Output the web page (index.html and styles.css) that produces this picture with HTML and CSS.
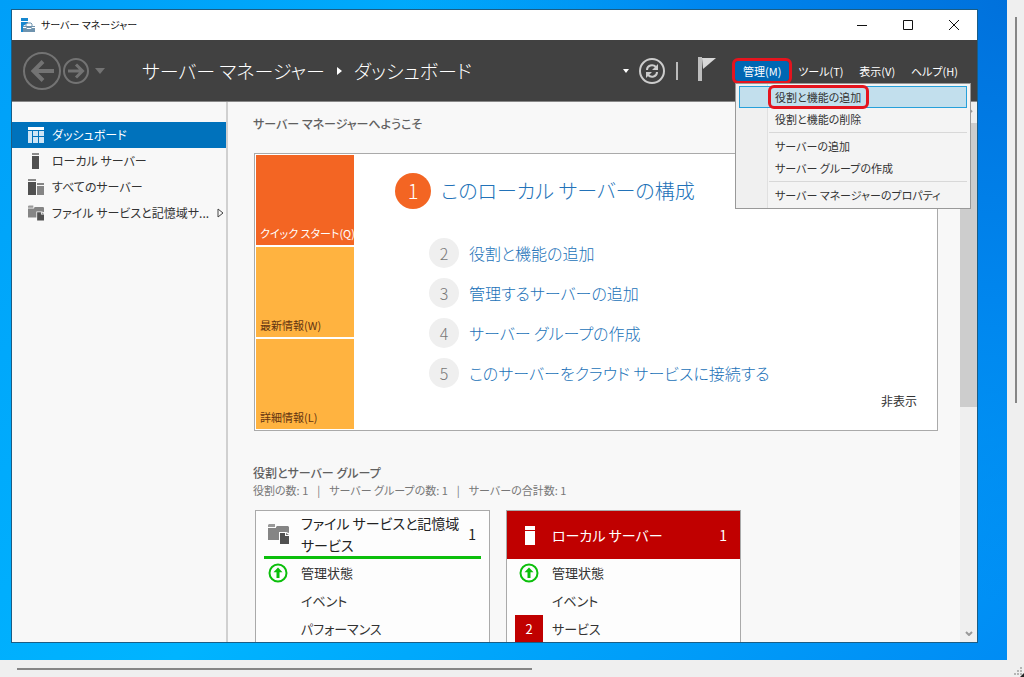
FILE: index.html
```html
<!DOCTYPE html>
<html lang="ja">
<head>
<meta charset="utf-8">
<title>サーバー マネージャー</title>
<link rel="stylesheet" href="styles.css">
</head>
<body>
<svg class="defs" aria-hidden="true">
  <symbol id="i-server" viewBox="0 0 16 16"><path fill="#8a8a8a" d="M4 0h7v2H4z"/><path fill="#505050" d="M4 3h7v13H4z"/></symbol>
  <symbol id="i-servers" viewBox="0 0 16 16"><path fill="#8a8a8a" d="M0 0h8v2H0z"/><path fill="#505050" d="M0 3h8v13H0z"/><path fill="#858585" d="M9 4h7v2H9zM9 7h7v9H9z"/></symbol>
  <symbol id="i-files" viewBox="0 0 21 20"><path fill="#9a9a9a" d="M1 0h6v3H0V1z"/><path fill="#858585" d="M0 4h8V3l1-1h11l1 1v6l-3-1h-7v8H0z"/><path fill="#505050" d="M12 9h5v3h4v8h-9z"/><path fill="#757575" d="M18 9l3 2h-3z"/></symbol>
  <symbol id="i-up" viewBox="0 0 20 20"><circle cx="10" cy="10" r="8.5" fill="none" stroke="#0bbf0b" stroke-width="2"/><path fill="#0bbf0b" d="M10 4.500l4.500 4.700h-3V15h-3V9.200h-3z"/></symbol>
</svg>
<div class="viewer">
  <div class="desktop">
    <div class="window">
      <div class="titlebar">
        <svg class="app-icon" viewBox="0 0 14 14"><path fill="#1687cf" d="M0 0h7v3H0zM0 4h7v1L2 8v6H0z"/><path fill="#6f93ae" d="M2 8h12v6H2z"/><path fill="none" stroke="#6f93ae" d="M5 8V6l1-1h4l1 1v2"/><path fill="none" stroke="#fff" d="M2 9.500h3l1 1h4l1-1h3"/></svg>
        <span class="app-name">サーバー マネージャー</span>
        <button class="win-btn" aria-label="最小化"><svg viewBox="0 0 12 12"><path d="M1 6.500h10"/></svg></button>
        <button class="win-btn" aria-label="最大化"><svg viewBox="0 0 12 12"><path d="M1.500 1.500h9v9h-9z"/></svg></button>
        <button class="win-btn" aria-label="閉じる"><svg viewBox="0 0 12 12"><path d="M1 1l10 10M11 1L1 11"/></svg></button>
      </div>
      <header class="header">
        <button class="icon-btn" aria-label="戻る"><svg class="back" viewBox="0 0 38 38"><circle cx="19" cy="19" r="18"/><path class="thick" d="M31 19H10M20 9.500L10.500 19l9.500 9.500"/></svg></button>
        <button class="icon-btn" aria-label="進む"><svg class="forward" viewBox="0 0 26 26"><circle cx="13" cy="13" r="12"/><path class="mid" d="M5 13h14M13 6.500l6.500 6.500-6.500 6.500"/></svg></button>
        <button class="icon-btn" aria-label="履歴"><svg class="history" viewBox="0 0 10 6"><path d="M0 0h10L5 6z"/></svg></button>
        <h1 class="crumbs"><span>サーバー マネージャー</span><svg class="crumb-arrow" viewBox="0 0 5 8"><path fill="#fff" d="M0 0l5 4-5 4z"/></svg><span>ダッシュボード</span></h1>
        <button class="icon-btn" aria-label="一覧"><svg class="tiny-down" viewBox="0 0 6 4"><path fill="#fff" d="M0 0h6L3 4z"/></svg></button>
        <button class="icon-btn refresh" aria-label="最新の情報に更新"><svg viewBox="0 0 26 26"><circle cx="13" cy="13" r="12"/><path d="M8 12c0-5 6-6 9-3M18 14c0 5-6 6-9 3"/><path class="solid" d="M19 6v6h-6zM7 20v-6h6z"/></svg></button>
        <span class="divider"></span>
        <button class="icon-btn flag" aria-label="通知"><svg viewBox="0 0 18 24"><path fill="#bdbdbd" d="M0 0h4v24H0z"/><path fill="#d8d8d8" d="M4 1h14L5 12z"/></svg></button>
        <nav class="menubar">
          <div class="menu">
            <button class="menu-btn open">管理(M)</button>
            <div class="dropdown">
              <button class="entry selected"><span class="marked">役割と機能の追加</span></button>
              <button class="entry">役割と機能の削除</button>
              <hr>
              <button class="entry">サーバーの追加</button>
              <button class="entry">サーバー グループの作成</button>
              <hr>
              <button class="entry">サーバー マネージャーのプロパティ</button>
            </div>
          </div>
          <button class="menu-btn">ツール(T)</button>
          <button class="menu-btn">表示(V)</button>
          <button class="menu-btn">ヘルプ(H)</button>
        </nav>
      </header>
      <div class="body">
        <nav class="sidebar">
          <a class="side-link active" href="#"><svg viewBox="0 0 16 16"><path fill="#fff" d="M0 0h16v3H0z"/><path fill="#cfe5f5" d="M0 4h4v12H0zM5 4h5v5H5zM11 4h5v5h-5zM5 10h5v6H5zM11 10h5v6h-5z"/></svg><span>ダッシュボード</span></a>
          <a class="side-link" href="#"><svg><use href="#i-server"/></svg><span>ローカル サーバー</span></a>
          <a class="side-link" href="#"><svg><use href="#i-servers"/></svg><span>すべてのサーバー</span></a>
          <a class="side-link" href="#"><svg><use href="#i-files"/></svg><span>ファイル サービスと記憶域サ...</span><svg class="expand" viewBox="0 0 7 10"><path d="M1 1l5 4-5 4z"/></svg></a>
        </nav>
        <main class="main">
          <h2 class="section-title">サーバー マネージャーへようこそ</h2>
          <section class="welcome">
            <div class="tiles">
              <button class="tile hot">クイック スタート(Q)</button>
              <button class="tile">最新情報(W)</button>
              <button class="tile">詳細情報(L)</button>
            </div>
            <div class="steps">
              <a class="step first" href="#"><span class="num">1</span><span>このローカル サーバーの構成</span></a>
              <a class="step" href="#"><span class="num">2</span><span>役割と機能の追加</span></a>
              <a class="step" href="#"><span class="num">3</span><span>管理するサーバーの追加</span></a>
              <a class="step" href="#"><span class="num">4</span><span>サーバー グループの作成</span></a>
              <a class="step" href="#"><span class="num">5</span><span>このサーバーをクラウド サービスに接続する</span></a>
              <button class="hide-btn">非表示</button>
            </div>
          </section>
          <h2 class="section-title">役割とサーバー グループ</h2>
          <p class="counts"><span>役割の数: 1</span><span>|</span><span>サーバー グループの数: 1</span><span>|</span><span>サーバーの合計数: 1</span></p>
          <div class="cards">
            <section class="card">
              <h3 class="card-head ok"><svg class="files"><use href="#i-files"/></svg><span class="card-name">ファイル サービスと記憶域サービス</span><span>1</span></h3>
              <a class="row" href="#"><svg><use href="#i-up"/></svg><span>管理状態</span></a>
              <a class="row" href="#"><span></span><span>イベント</span></a>
              <a class="row" href="#"><span></span><span>パフォーマンス</span></a>
            </section>
            <section class="card">
              <h3 class="card-head alert"><svg class="srv" viewBox="0 0 10 19"><path fill="#fff" d="M0 0h10v4H0zM0 5h10v14H0z"/></svg><span class="card-name">ローカル サーバー</span><span>1</span></h3>
              <a class="row" href="#"><svg><use href="#i-up"/></svg><span>管理状態</span></a>
              <a class="row" href="#"><span></span><span>イベント</span></a>
              <a class="row" href="#"><span class="badge">2</span><span>サービス</span></a>
            </section>
          </div>
        </main>
        <div class="scrollbar">
          <svg viewBox="0 0 8 5"><path d="M1 4l3-3 3 3"/></svg>
          <div class="track"><div class="thumb"></div></div>
          <svg viewBox="0 0 8 5"><path d="M1 1l3 3 3-3"/></svg>
        </div>
      </div>
    </div>
  </div>
  <div class="vbar"><div class="vthumb"></div></div>
  <div class="hbar"><div class="hthumb"></div></div>
  <div class="corner"><svg viewBox="0 0 17 17"><path fill="#b5b5b5" d="M13 7h2v2h-2zM10 10h2v2h-2zM13 10h2v2h-2zM7 13h2v2H7zM10 13h2v2h-2zM13 13h2v2h-2z"/><path fill="#222" d="M17 13v4h-4z"/></svg></div>
</div>
</body>
</html>
```
FILE: styles.css
```css
* { box-sizing: border-box; }
body {
  margin: 0;
  font: 11px/16px "Noto Sans CJK JP", "Noto Sans", sans-serif;
  font-feature-settings: "palt";
  color: #333;
}
button { font: inherit; font-feature-settings: inherit; color: inherit; background: none; border: 0; padding: 0; white-space: nowrap; }
a { color: inherit; text-decoration: none; }
h1, h2, h3, p { margin: 0; font-weight: 400; }
svg { display: block; flex: none; }
.defs { display: none; }

.viewer { height: 100vh; display: grid; grid-template: minmax(0, 1fr) 17px / minmax(0, 1fr) 17px; background: #efefef; }
.desktop {
  display: flex;
  padding: 9px 29px 17px 11px;
  background: radial-gradient(circle at 100% 0, #0071dc 0, #0086ee 25%, transparent 50%), linear-gradient(135deg, #009ff8, #00b4ff 50%, #008cf4);
}
.window { flex: 1; min-width: 0; display: flex; flex-direction: column; border: 1px solid #1b5d85; background: #f8f8f8; }

.titlebar { height: 30px; flex: none; display: flex; align-items: center; background: #fff; color: #111; }
.app-icon { width: 14px; height: 14px; margin: 0 6px 0 9px; }
.app-name { flex: 1; font-size: 10px; }
.win-btn { width: 46px; height: 30px; display: grid; place-items: center; }
.win-btn svg { width: 12px; height: 12px; fill: none; stroke: #111; }

.header { height: 62px; flex: none; display: flex; align-items: center; background: #414141; color: #fff; border-bottom: 1px solid #888; padding: 0 12px 0 11px; }
.icon-btn svg { fill: none; stroke: #737373; stroke-width: 2; }
.icon-btn .back { width: 38px; height: 38px; }
.icon-btn .thick { stroke-width: 4; }
.icon-btn .mid { stroke-width: 3; }
.icon-btn .forward { width: 26px; height: 26px; margin-left: 2px; }
.icon-btn .history { width: 10px; height: 6px; margin-left: 6px; fill: #737373; stroke: none; }
.icon-btn .tiny-down { width: 6px; height: 4px; stroke: none; margin-right: 10px; }
.crumbs { flex: 1; display: flex; align-items: center; gap: 12px; margin-left: 37px; font-size: 19px; line-height: 32px; font-weight: 300; white-space: nowrap; }
.crumb-arrow { width: 5px; height: 8px; }
.icon-btn.refresh svg { width: 26px; height: 26px; stroke: #ccc; }
.icon-btn.refresh .solid { fill: #ccc; stroke: none; }
.divider { width: 2px; height: 18px; margin: 0 20px 0 11px; background: #bbb; }
.icon-btn.flag svg { width: 18px; height: 24px; margin-bottom: 4px; stroke: none; }
.menubar { display: flex; align-items: center; justify-content: space-between; width: 230px; margin-left: 19px; }
.menu { position: relative; }
.menu-btn { height: 20px; padding: 0 7px; }
.menu-btn.open { padding: 0 8px; background: #0067b3; outline: 3px solid #e5141e; border-radius: 3px; }
.dropdown { position: absolute; z-index: 2; top: 22px; left: 0; width: 236px; padding: 2px 3px; background: linear-gradient(90deg, #f0f0f0 31px, #e0e0e0 31px, #e0e0e0 32px, #f4f4f4 32px); border: 1px solid #999; color: #333; }
.entry { display: block; width: 100%; height: 22px; padding: 0 0 0 35px; border: 1px solid transparent; text-align: left; }
.entry.selected { background: #c2dfed; border-color: #26a0da; }
.marked { display: inline-block; padding: 1px 5px 1px 4px; margin-left: -4px; outline: 3px solid #e5141e; border-radius: 3px; }
.dropdown hr { height: 1px; margin: 2px 0 2px 30px; border: 0; background: #d8d8d8; }

.body { flex: 1; min-height: 0; display: grid; grid-template-columns: 216px minmax(0, 1fr) 17px; }
.sidebar { padding-top: 20px; border-right: 2px solid #d0d0d0; }
.side-link { display: grid; grid-template-columns: 16px 1fr auto; gap: 8px; align-items: center; height: 26px; padding: 0 5px 0 16px; font-size: 12px; white-space: nowrap; }
.side-link svg { width: 16px; height: 16px; }
.side-link.active { background: #0072bc; color: #fff; }
.side-link .expand { width: 7px; height: 10px; fill: none; stroke: #444; }

.main { overflow: hidden; padding: 13px 22px 0 25px; }
.section-title { font-size: 12px; line-height: 18px; font-weight: 500; color: #606060; }
.welcome { display: flex; margin: 20px 0 33px 1px; border: 1px solid #aaa; background: #fff; }
.tiles { width: 99px; display: grid; grid-template-columns: minmax(0, 1fr); gap: 2px; padding: 1px 0 1px 1px; }
.tile { height: 90px; display: flex; align-items: flex-end; padding: 0 0 4px 4px; background: #ffb340; color: #633411; }
.tile.hot { background: #f36523; color: #fff; }
.steps { flex: 1; display: flex; flex-direction: column; padding: 19px 20px 0 41px; }
.step { display: flex; align-items: center; gap: 10px; height: 40px; padding-left: 34px; font-size: 16px; line-height: 28px; font-weight: 300; color: #2272b8; }
.step.first { height: 36px; margin-bottom: 24px; padding-left: 0; font-size: 20px; }
.num { width: 30px; height: 30px; border-radius: 50%; display: grid; place-items: center; background: #efefef; color: #777; }
.first .num { width: 36px; height: 36px; background: #f36523; color: #fff; }
.hide-btn { align-self: flex-end; font-size: 12px; }
.counts { display: flex; gap: 9px; color: #777; }
.cards { display: grid; grid-template-columns: 235px 235px; gap: 16px; margin: 12px 0 0 2px; }
.card { height: 220px; border: 1px solid #aaa; background: #fdfdfd; }
.card-head { height: 48px; display: grid; grid-template-columns: 25px 1fr auto; gap: 8px; align-items: center; font-size: 14px; line-height: 22px; color: #222; }
.ok { margin: 0 8px; padding: 0 5px 0 4px; border-bottom: 3px solid #0bbf0b; }
.alert { padding: 0 13px 0 12px; background: #c00000; color: #fff; }
.files { width: 21px; height: 20px; }
.srv { width: 10px; height: 19px; margin-left: 6px; }
.row { display: grid; grid-template-columns: 28px 1fr; gap: 9px; align-items: center; height: 28px; padding-left: 8px; font-size: 13px; line-height: 20px; }
.row svg { width: 20px; height: 20px; margin-left: 4px; }
.badge { height: 28px; display: grid; place-items: center; background: #c00000; color: #fff; }

.scrollbar { display: flex; flex-direction: column; align-items: center; padding: 6px 0; background: #efefef; }
.scrollbar svg { width: 8px; height: 5px; fill: none; stroke: #999; stroke-width: 2; }
.track { flex: 1; align-self: stretch; padding: 10px 0; }
.thumb { height: 57%; background: #cdcdcd; }
.vbar { display: flex; justify-content: center; padding-top: 17px; }
.vthumb { width: 2px; height: 60%; background: #858585; }
.hbar { display: flex; align-items: center; padding-left: 17px; }
.hthumb { height: 2px; width: 52%; background: #858585; }
.corner svg { width: 17px; height: 17px; }
```
